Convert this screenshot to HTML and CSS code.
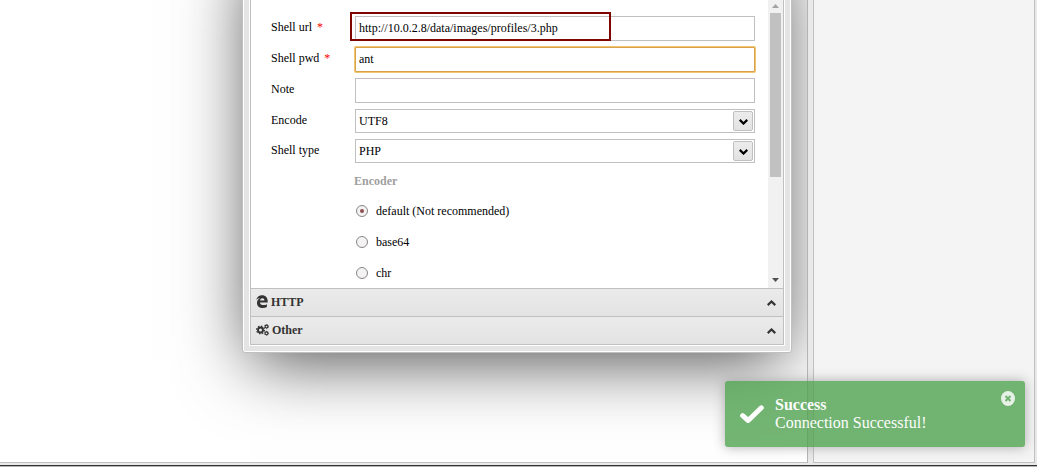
FILE: index.html
```html
<!DOCTYPE html>
<html lang="en">
<head>
<meta charset="utf-8">
<title>Shell manager</title>
<link rel="stylesheet" href="styles.css">
</head>
<body>
<div class="app">
  <div class="workspace">
    <main class="pane">
      <section class="window">
        <div class="window-body">
          <div class="scroller">
            <form class="form">
              <div class="row"><label class="label">Shell url <span class="req">*</span></label><div class="input">http://10.0.2.8/data/images/profiles/3.php<span class="highlight"></span></div></div>
              <div class="row"><label class="label">Shell pwd <span class="req">*</span></label><div class="input focused">ant</div></div>
              <div class="row"><label class="label">Note</label><div class="input"></div></div>
              <div class="row"><label class="label">Encode</label><div class="input select">UTF8<span class="drop"><svg width="9" height="6" viewBox="0 0 9 6"><path d="M0.7 0.9 4.5 4.5 8.3 0.9" fill="none" stroke="#000" stroke-width="2.3"/></svg></span></div></div>
              <div class="row"><label class="label">Shell type</label><div class="input select">PHP<span class="drop"><svg width="9" height="6" viewBox="0 0 9 6"><path d="M0.7 0.9 4.5 4.5 8.3 0.9" fill="none" stroke="#000" stroke-width="2.3"/></svg></span></div></div>
              <div class="group-title">Encoder</div>
              <div class="option"><span class="radio checked"></span>default (Not recommended)</div>
              <div class="option"><span class="radio"></span>base64</div>
              <div class="option"><span class="radio"></span>chr</div>
            </form>
            <div class="scrollbar">
              <svg class="arrow" width="7" height="4" viewBox="0 0 7 4"><path d="M0 4 3.5 0 7 4z" fill="#a3a3a3"/></svg>
              <div class="thumb"></div>
              <svg class="arrow arrow-down" width="7" height="4" viewBox="0 0 7 4"><path d="M0 0 3.5 4 7 0z" fill="#505050"/></svg>
            </div>
          </div>
          <div class="section">
            <svg class="section-icon" width="12" height="13" viewBox="0 0 12 13"><path d="M.2 5.200C.8 2 3.200.2 6 .2c3.800 0 5.700 2.700 5.700 5.900v1.300H4c.1 1.900 1.500 2.700 3.500 2.700 1.300 0 2.400-.3 3.400-.9v2.700c-1.200.7-2.500 1-4.100 1C3.300 12.900 1 10.900 1 7.900c0-2.100 1.200-3.900 3.200-4.800C2.500 3.200 1.100 3.900.2 5.200zM4.100 5.400h4.300c0-1.400-.6-2.200-2.100-2.200-1.200 0-2 .9-2.200 2.200z" fill="#333" fill-rule="evenodd"/></svg>
            <span>HTTP</span>
            <svg class="chevron" width="9" height="6" viewBox="0 0 9 6"><path d="M.7 5.100 4.500 1.500 8.300 5.100" fill="none" stroke="#333" stroke-width="2.200"/></svg>
          </div>
          <div class="section">
            <svg class="section-icon gears" width="13" height="12" viewBox="0 0 13 12"><g fill="none" stroke="#333"><circle cx="4.500" cy="6" r="2.500" stroke-width="1.900"/><circle cx="4.500" cy="6" r="3.900" stroke-width="1.200" stroke-dasharray="1.530 1.530"/><circle cx="10.500" cy="2.500" r="1.400" stroke-width="1.100"/><circle cx="10.500" cy="2.500" r="2.100" stroke-width=".8" stroke-dasharray="1.100 1.100"/><circle cx="10.500" cy="9.300" r="1.400" stroke-width="1.100"/><circle cx="10.500" cy="9.300" r="2.100" stroke-width=".8" stroke-dasharray="1.100 1.100"/></g></svg>
            <span>Other</span>
            <svg class="chevron" width="9" height="6" viewBox="0 0 9 6"><path d="M.7 5.100 4.500 1.500 8.300 5.100" fill="none" stroke="#333" stroke-width="2.200"/></svg>
          </div>
        </div>
      </section>
    </main>
    <aside class="side"></aside>
  </div>
  <footer class="status"></footer>
</div>
<div class="toast">
  <svg class="check" width="24" height="19" viewBox="0 0 24 19"><path d="M2.700 10.700 8.200 15.500 21.300 2.800" fill="none" stroke="#fff" stroke-width="5" stroke-linecap="round" stroke-linejoin="round"/></svg>
  <div class="toast-text"><div class="toast-title">Success</div><div>Connection Successful!</div></div>
  <svg class="close" width="14" height="15" viewBox="0 0 14 15"><ellipse cx="7" cy="7.500" rx="7" ry="7.400" fill="#fff"/><path d="M4.500 5 9.500 10M9.500 5 4.500 10" stroke="#51a351" stroke-width="2"/></svg>
</div>
</body>
</html>
```
FILE: styles.css
```css
* { box-sizing: border-box; }
body {
  margin: 0;
  width: 1037px;
  height: 467px;
  overflow: hidden;
  position: relative;
  background: #e9e9e9;
  font: 12px/14px "Liberation Serif", "Times New Roman", serif;
  color: #000;
}
.app { display: flex; flex-direction: column; height: 467px; }
.workspace { display: flex; gap: 5px; height: 463px; }
.pane {
  position: relative;
  width: 808px;
  overflow: hidden;
  background: #fff;
  border-right: 1px solid #b4b4b4;
  border-bottom: 1px solid #c0c0c0;
}
.side {
  width: 222px;
  background: #f4f4f4;
  border: solid #c0c0c0;
  border-width: 0 1px 1px;
}
.status {
  height: 2px;
  margin-top: 2px;
  background: #b2b2b2;
  border-top: 1px solid #333;
}

.window {
  position: absolute;
  left: 242px;
  top: -60px;
  width: 550px;
  height: 413px;
  padding: 7px;
  border: 1px solid #c0c0c0;
  border-radius: 3px;
  background: #e4e4e4;
  box-shadow: inset 0 0 0 1px #fff, 0 16px 66px -8px rgba(0, 0, 0, .7);
}
.window-body {
  display: flex;
  flex-direction: column;
  justify-content: flex-end;
  height: 397px;
  border: 1px solid #c0c0c0;
  box-shadow: 0 0 0 1px #fff;
  background: #fff;
}
.scroller { display: flex; height: 288px; }
.form { flex: 1; padding: 16px 13px 0 20px; }
.row { display: flex; height: 25px; margin-bottom: 6px; }
.row:has(.select) { height: 24px; }
.label { width: 84px; padding-top: 4px; }
.req { color: #f00; margin-left: 2px; }
.input {
  position: relative;
  display: flex;
  align-items: center;
  width: 400px;
  padding: 0 0 1px 3px;
  border: 1px solid #c0c0c0;
  background: #fff;
}
.select { padding-bottom: 0; }
.focused {
  border-color: #d9a14c;
  box-shadow: 0 0 0 1px #f0c670;
  border-radius: 1px;
}
.highlight {
  position: absolute;
  inset: -5px 143px -1px -6px;
  border: 2px solid #800400;
}
.drop {
  display: flex;
  align-items: center;
  justify-content: center;
  width: 20px;
  height: 20px;
  margin: 0 1px 0 auto;
  padding-top: 2px;
  padding-left: 1px;
  border: 1px solid #c0c0c0;
  border-radius: 2px;
  background: linear-gradient(#ececec, #e2e2e2);
}
.group-title { margin: 11px 0 0 83px; font-weight: bold; color: #a0a0a0; }
.option {
  display: flex;
  align-items: center;
  gap: 8px;
  height: 31px;
  margin-left: 85px;
}
.group-title + .option { margin-top: 7px; }
.radio {
  display: flex;
  align-items: center;
  justify-content: center;
  width: 12px;
  height: 12px;
  border: 1px solid #8b8585;
  border-radius: 50%;
  background: #f3f3f3;
}
.checked::after {
  content: "";
  width: 4px;
  height: 4px;
  border-radius: 50%;
  background: #8e4f4f;
}
.scrollbar {
  display: flex;
  flex-direction: column;
  align-items: center;
  width: 15px;
  padding: 4px 0 6px;
  background: #f1f1f1;
}
.thumb { width: 11px; height: 164px; margin-top: 5px; background: #c1c1c1; }
.arrow-down { margin-top: auto; }
.section {
  display: flex;
  align-items: center;
  height: 28px;
  padding: 0 7px 2px 6px;
  border-top: 1px solid #c0c0c0;
  background: linear-gradient(#ebebeb, #e3e3e3);
  color: #333;
  font-weight: bold;
}
.section-icon { margin: 0 3px 0 -1px; }
.chevron { margin: 2px 0 0 auto; }

.toast {
  position: absolute;
  left: 725px;
  top: 381px;
  display: flex;
  align-items: flex-start;
  width: 300px;
  height: 66px;
  padding: 15px 10px 15px 15px;
  border-radius: 3px;
  background: #51a351;
  box-shadow: 0 0 12px #999;
  opacity: .8;
  color: #fff;
  font-size: 16px;
  line-height: 18px;
}
.toast-title { font-weight: bold; }
.toast-text { margin-left: 11px; }
.check { margin-top: 9px; }
.close { margin: -5px 0 0 auto; opacity: .85; }
```
